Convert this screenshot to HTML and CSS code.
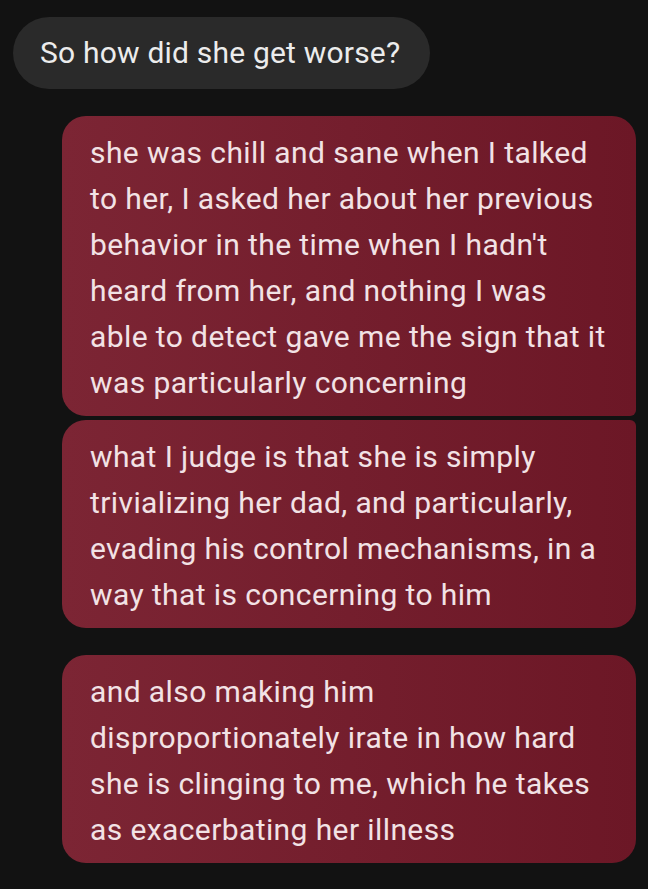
FILE: index.html
```html
<!DOCTYPE html>
<html>
<head>
<meta charset="utf-8">
<link rel="stylesheet" href="styles.css">
</head>
<body>
<div class="chat">
  <div class="row in">
    <div class="bubble gray">So how did she get worse?</div>
  </div>
  <div class="group">
    <div class="bubble red first">she was chill and sane when I talked to her, I asked her about her previous behavior in the time when I hadn't heard from her, and nothing I was able to detect gave me the sign that it was particularly concerning</div>
    <div class="bubble red last">what I judge is that she is simply trivializing her dad, and particularly, evading his control mechanisms, in a way that is concerning to him</div>
  </div>
  <div class="group">
    <div class="bubble red single">and also making him disproportionately irate in how hard she is clinging to me, which he takes as exacerbating her illness</div>
  </div>
</div>
</body>
</html>
```
FILE: styles.css
```css
html, body {
  margin: 0;
  padding: 0;
  background: #121212;
}
body {
  width: 648px;
  height: 889px;
  overflow: hidden;
  font-family: Roboto, "Liberation Sans", sans-serif;
}
.chat {
  display: flex;
  flex-direction: column;
  padding: 17px 12px 0 13px;
}
.row.in {
  display: flex;
}
.bubble {
  box-sizing: border-box;
}
.gray {
  background: #2a2a2a;
  color: #ececec;
  font-size: 30px;
  line-height: 34px;
  letter-spacing: 0.2px;
  padding: 19px 30px 19px 27px;
  border-radius: 36px;
}
.group {
  display: flex;
  flex-direction: column;
  gap: 4px;
  margin-left: 49px;
  margin-top: 27px;
}
.red {
  background: linear-gradient(90deg, #7c2534 0%, #6c1726 100%);
  color: #f2e2e5;
  font-size: 30px;
  line-height: 46px;
  letter-spacing: 0.4px;
  padding: 14px 27px 10px 28px;
  width: 574px;
}
.first {
  border-radius: 24px 24px 6px 24px;
}
.last {
  border-radius: 24px 6px 24px 24px;
}
.single {
  border-radius: 24px;
}
```
